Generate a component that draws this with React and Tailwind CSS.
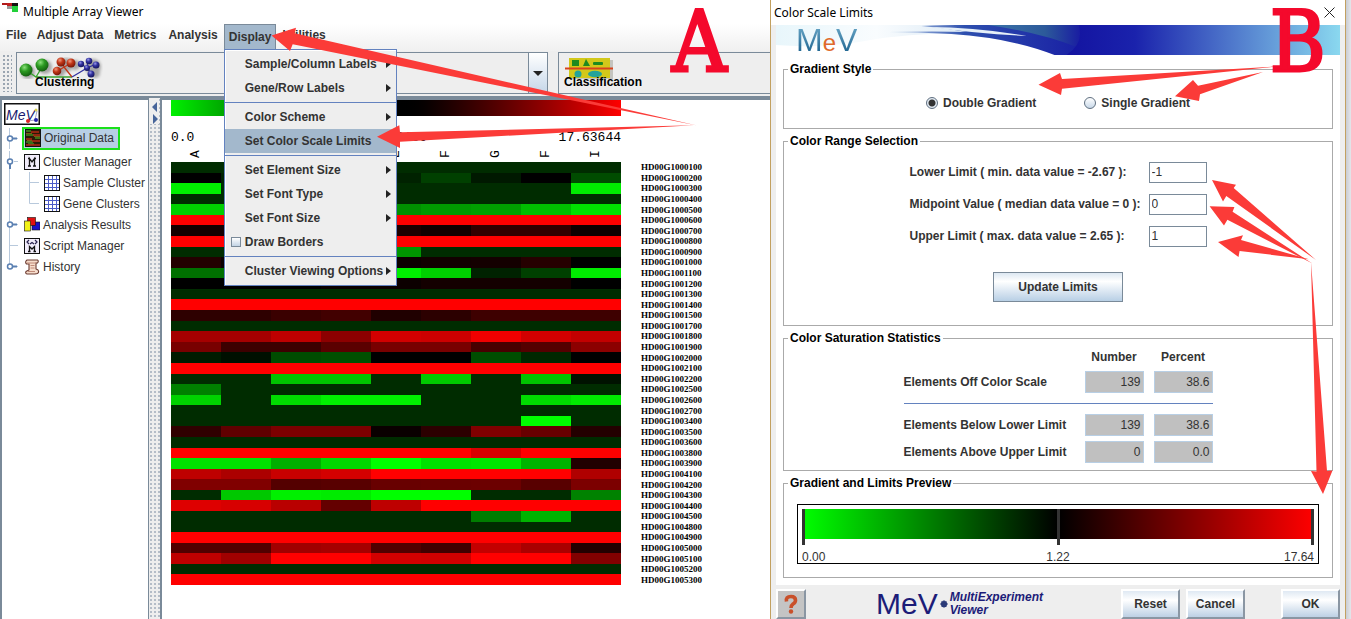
import React from "react";

const R = 255;
const D = -44;
const fill = (v) => Array(9).fill(v);

// Expression level per gene: positive values are red, negative values green.
const genes = [
  ["1000100", fill(D)],
  ["1000200", [0, -34, -34, -34, -34, -64, -25, 0, -76]],
  ["1000300", [-240, D, D, D, D, D, D, D, -235]],
  ["1000400", fill(D)],
  ["1000500", [-208, -208, -160, -150, -144, -155, -160, -190, -225]],
  ["1000600", fill(R)],
  ["1000700", [20, 20, 20, 30, 30, 18, 50, 50, 15]],
  ["1000800", fill(R)],
  ["1000900", [D, D, D, D, -150, D, D, D, D]],
  ["1001000", [35, 10, 10, 10, 12, 18, 20, 38, 0]],
  ["1001100", [-112, -112, -150, -200, -240, -208, -34, -64, -235]],
  ["1001200", [0, 0, 0, 10, 12, 20, 20, 20, 0]],
  ["1001300", fill(D)],
  ["1001400", fill(R)],
  ["1001500", [46, 46, 58, 66, 32, 44, 62, 62, 62]],
  ["1001700", fill(D)],
  ["1001800", [165, 165, 190, 140, 210, 205, 240, 210, 195]],
  ["1001900", [120, 60, 60, 90, 120, 120, 72, 84, 140]],
  ["1002000", [-28, -16, -76, -80, 0, 0, -78, -40, 0]],
  ["1002100", fill(R)],
  ["1002200", [D, D, -195, -195, D, -200, D, -195, -18]],
  ["1002500", [-128, D, D, D, D, D, D, D, D]],
  ["1002600", [-210, D, -220, -240, -240, D, D, -220, -235]],
  ["1002700", fill(D)],
  ["1003400", [D, D, D, D, D, D, D, -255, D]],
  ["1003500", [48, 96, 124, 124, 10, 44, 128, 104, 36]],
  ["1003600", fill(D)],
  ["1003800", [R, R, R, R, R, R, 215, R, R]],
  ["1003900", [-225, -225, -175, -215, -255, -225, -230, -180, 34]],
  ["1004100", [190, 172, 200, 212, R, R, R, R, 176]],
  ["1004200", [128, 128, 84, 88, 104, 106, 108, 88, 124]],
  ["1004300", [D, -200, -240, -235, -255, -255, D, D, -130]],
  ["1004400", [222, 215, 185, 100, 190, R, R, R, R]],
  ["1004500", [D, D, D, D, D, D, -125, -180, D]],
  ["1004800", fill(D)],
  ["1004900", fill(R)],
  ["1005000", [80, 80, 160, 165, 80, 64, 195, 170, 36]],
  ["1005100", [190, 160, R, R, 210, 208, R, R, 130]],
  ["1005200", fill(D)],
  ["1005300", fill(R)],
];

const samples = ["A", "B", "C", "D", "E", "F", "G", "F", "I"];
const color = (v) => (v >= 0 ? `rgb(${v},0,0)` : `rgb(0,${-v},0)`);

function HeatMap() {
  return (
    <div className="flex gap-5">
      <svg
        className="h-[423px] w-[450px] shrink-0"
        viewBox="0 0 9 40"
        preserveAspectRatio="none"
        shapeRendering="crispEdges"
        aria-label="Expression heat map"
      >
        {genes.map(([id, row], y) =>
          row.map((v, x) => (
            <rect key={id + x} x={x} y={y} width="1" height="1" fill={color(v)} />
          ))
        )}
      </svg>
      <ul className="grid h-[423px] auto-rows-fr font-['Liberation_Serif',serif] text-[9px] leading-[10px] font-bold text-black">
        {genes.map(([id]) => (
          <li key={id} className="flex items-center">HD00G{id}</li>
        ))}
      </ul>
    </div>
  );
}

function ClusterIcon() {
  return (
    <svg width="84" height="22" viewBox="0 0 84 22">
      <defs>
        <radialGradient id="gBall" cx=".38" cy=".3" r=".7">
          <stop offset="0" stopColor="#8be07a" /><stop offset=".45" stopColor="#2c9a22" /><stop offset="1" stopColor="#146010" />
        </radialGradient>
        <radialGradient id="rBall" cx=".38" cy=".3" r=".7">
          <stop offset="0" stopColor="#f29a80" /><stop offset=".45" stopColor="#c23718" /><stop offset="1" stopColor="#7a1808" />
        </radialGradient>
        <radialGradient id="bBall" cx=".38" cy=".3" r=".7">
          <stop offset="0" stopColor="#9a9ae8" /><stop offset=".45" stopColor="#3232a0" /><stop offset="1" stopColor="#16165c" />
        </radialGradient>
        <filter id="soft" x="-20%" y="-20%" width="150%" height="150%"><feGaussianBlur stdDeviation="1.5" /></filter>
      </defs>
      <g fill="#777" opacity=".6" filter="url(#soft)">
        <circle cx="9" cy="15" r="7" /><circle cx="26" cy="10" r="7" /><circle cx="47" cy="8" r="7" />
        <circle cx="56" cy="8" r="5" /><circle cx="41" cy="15" r="5" /><circle cx="74" cy="10" r="8" /><circle cx="76" cy="16" r="5" />
      </g>
      <path d="M7 13 17 20 23 10M17 20h36" fill="none" stroke="#3aa32f" strokeWidth="1.3" />
      <path d="M39 14 45 10 53 20 45 10 43 5M45 10 53 6" fill="none" stroke="#c23718" strokeWidth="1.3" />
      <path d="M53 20 68 11 62 7M68 11l1-7M68 11l9-4M68 11l4 5" fill="none" stroke="#3232a0" strokeWidth="1.3" />
      <g fill="url(#gBall)"><circle cx="7" cy="13" r="6.5" /><circle cx="23" cy="8" r="6.5" /></g>
      <g fill="url(#rBall)"><circle cx="42" cy="5" r="4.5" /><circle cx="52" cy="6" r="4.5" /><circle cx="38" cy="14" r="4.3" /></g>
      <g fill="url(#bBall)"><circle cx="70" cy="4" r="3.3" /><circle cx="62" cy="7" r="3.2" /><circle cx="77" cy="8" r="3.5" /><circle cx="68" cy="11" r="3" /><circle cx="72" cy="17" r="3.5" /></g>
    </svg>
  );
}

function ClassificationIcon() {
  return (
    <svg width="50" height="22" viewBox="0 0 50 22">
      <rect x="7" y="3" width="42" height="19" fill="#a8a8a0" opacity=".6" />
      <rect x="5" y="1" width="41" height="20" fill="#d2c81a" />
      <rect x="8" y="3" width="7" height="6" fill="#1f8a1f" />
      <path d="M19 9 22 2 26 9Z" fill="#1f8a1f" />
      <rect x="29" y="5" width="10" height="3" rx="1" fill="#1f8a1f" />
      <path d="M1 11.500H49" stroke="#d8431d" strokeWidth="2" />
      <circle cx="14" cy="17" r="3.500" fill="#23a39a" />
      <ellipse cx="31" cy="17" rx="7" ry="3.200" fill="#23a39a" />
    </svg>
  );
}

const Caret = () => (
  <svg width="5" height="8" viewBox="0 0 5 8" className="shrink-0"><path d="M0 0 5 4 0 8Z" fill="#222" /></svg>
);

function Item({ children, sub, on }) {
  return (
    <button
      role="menuitem"
      className={
        "flex h-6 w-full items-center justify-between pr-[5px] pl-5 text-left " + (on ? "bg-[#a3b8cc]" : "")
      }
    >
      {children}
      {sub && <Caret />}
    </button>
  );
}

const Sep = () => <hr className="my-[2px] border-t border-[#6382bf]" />;

function DisplayMenu() {
  return (
    <div role="menu" className="absolute top-full left-0 z-10 w-[173px] border border-[#6382bf] bg-[#eeeeee] pt-[2px] pb-[2px] shadow-[inset_1px_1px_0_#fff]">
      <Item sub>Sample/Column Labels</Item>
      <Item sub>Gene/Row Labels</Item>
      <Sep />
      <Item sub>Color Scheme</Item>
      <Item on>Set Color Scale Limits</Item>
      <Sep />
      <Item sub>Set Element Size</Item>
      <Item sub>Set Font Type</Item>
      <Item sub>Set Font Size</Item>
      <label className="flex h-6 items-center gap-1 pl-[6px]">
        <input type="checkbox" className="size-[10px] appearance-none border border-[#7a8a99] bg-linear-to-b from-white to-[#c3d4e5]" />
        Draw Borders
      </label>
      <Sep />
      <Item sub>Cluster Viewing Options</Item>
    </div>
  );
}

function Knob({ open, last, leaf }) {
  return (
    <svg width="20" height="21" viewBox="0 0 20 21" className="shrink-0">
      <path d={last ? "M7.500 0V10" : "M7.500 0V21"} stroke="#b8c9dc" />
      {leaf ? (
        <path d="M7.500 10.500H16" stroke="#b8c9dc" />
      ) : (
        <>
          <path d="M12 10.500H16" stroke="#b8c9dc" />
          <path d={open ? "M8 12V18" : "M10 10.500H15"} stroke="#5b80b2" strokeWidth="2" />
          <circle cx="8" cy="10.500" r="2.500" fill="#fff" stroke="#5b80b2" strokeWidth="1.500" />
        </>
      )}
    </svg>
  );
}

const DataIcon = () => (
  <svg width="16" height="18" viewBox="0 0 16 18" className="shrink-0">
    <rect width="16" height="18" fill="#2a1a06" />
    <path d="M1 2h5M1 6h8M10 9h5M1 13h7M3 15h6" stroke="#3f8a1f" strokeWidth="1.500" />
    <path d="M6 3h8M8 6h7M1 10h6M7 12h8M1 16h14" stroke="#b32a14" strokeWidth="1.500" />
    <path d="M1 4.500h6M9 7.500h6M2 11.500h5" stroke="#7a5a14" />
    <rect x=".5" y=".5" width="15" height="17" fill="none" stroke="#111" />
  </svg>
);
const MIcon = ({ script }) => (
  <svg width="16" height="16" viewBox="0 0 16 16" className="shrink-0">
    <rect x=".5" y=".5" width="15" height="15" fill="#f1ecfa" stroke="#111" />
    {script ? (
      <>
        <path d="M5.500 13.500V8.500L8 11 10.500 8.500V13.500M4 13.500H6.500M9.500 13.500H12" fill="none" stroke="#111" strokeWidth="1.300" />
        <path d="M5 2 3 4 5 6M11 2 13 4 11 6M6 6 8 4.500 10 6" fill="none" stroke="#2a2450" strokeWidth="1.200" />
      </>
    ) : (
      <path d="M5.500 12V4.500L8 8 10.500 4.500V12M4 4.500H6M10 4.500H12M4 12H7M9 12H12" fill="none" stroke="#111" strokeWidth="1.300" />
    )}
  </svg>
);
const GridIcon = () => (
  <svg width="16" height="16" viewBox="0 0 16 16" className="shrink-0">
    <rect x=".5" y=".5" width="15" height="15" fill="#fff" stroke="#111" />
    <path d="M4.500 1V15M8.500 1V15M12.500 1V15M1 4.500H15M1 8.500H15M1 12.500H15" stroke="#4c5cc8" />
  </svg>
);
const ResultsIcon = () => (
  <svg width="16" height="16" viewBox="0 0 16 16" className="shrink-0">
    <rect x="8" y="5" width="8" height="8" fill="#1a10c8" stroke="#111" strokeWidth=".6" />
    <rect x="3.500" y=".5" width="8" height="8" fill="#e01010" stroke="#111" strokeWidth=".6" />
    <rect x=".5" y="4" width="6" height="10" fill="#f2f218" stroke="#111" strokeWidth=".6" />
  </svg>
);
const HistoryIcon = () => (
  <svg width="16" height="16" viewBox="0 0 16 16" className="shrink-0">
    <path d="M3 1H13.500Q15 2 13.500 4H12V10L14 11Q15.500 13 13.500 14.500L11 15H3Q1 14.500 2 12.500L5 11V5H2.500Q.5 3 3 1Z" fill="#f6dccb" stroke="#6b3a30" strokeWidth="1.100" />
    <path d="M3 4H12M6.500 6.500H10.500M6.500 9H10.500M4 12.500H11" stroke="#c08a78" />
  </svg>
);

function Branch({ last }) {
  return (
    <>
      <svg width="20" height="21" viewBox="0 0 20 21" className="shrink-0"><path d="M7.500 0V21" stroke="#b8c9dc" /></svg>
      <svg width="20" height="21" viewBox="0 0 20 21" className="shrink-0">
        <path d={last ? "M7.500 0V10.500H17" : "M7.500 0V21M7.500 10.500H17"} fill="none" stroke="#b8c9dc" />
      </svg>
    </>
  );
}

function Tree() {
  const row = "flex h-[21px] items-center";
  const text = "pl-[3px] whitespace-nowrap";
  return (
    <nav className="w-[149px] shrink-0 overflow-hidden border-t-2 border-r border-l-2 border-[#7a8a99] bg-white pt-[3px] text-[12px] leading-4 text-[#333]">
      <svg width="36" height="22" viewBox="0 0 36 22" className="ml-[2px]">
        <rect x=".75" y=".75" width="34.500" height="20.500" fill="#fff" stroke="#111" strokeWidth="1.500" />
        <text x="2" y="17" fontFamily="Liberation Sans" fontStyle="italic" fontSize="14" fill="#1b1b70">MeV</text>
        <path d="M24 18 31 17 33 8" fill="none" stroke="#a0a0c0" />
        <circle cx="24" cy="18" r="2" fill="#d22" /><circle cx="32" cy="17" r="2" fill="#22a" /><circle cx="32" cy="7" r="1.500" fill="#d8cf50" />
      </svg>
      <ul>
        <li className="flex h-[26px] items-center">
          <Knob />
          <span className="flex h-[23px] items-center gap-[3px] border-2 border-[#1be01b] bg-[#b8cfe5] pr-1 pl-px whitespace-nowrap">
            <DataIcon />Original Data
          </span>
        </li>
        <li className={row}><Knob open /><span className="pl-[2px]"><MIcon /></span><span className={text}>Cluster Manager</span></li>
        <li className={row}><Branch /><span className="pl-[2px]"><GridIcon /></span><span className={text}>Sample Cluster</span></li>
        <li className={row}><Branch last /><span className="pl-[2px]"><GridIcon /></span><span className={text}>Gene Clusters</span></li>
        <li className={row}><Knob /><span className="pl-[2px]"><ResultsIcon /></span><span className={text}>Analysis Results</span></li>
        <li className={row}><Knob leaf /><span className="pl-[2px]"><MIcon script /></span><span className={text}>Script Manager</span></li>
        <li className={row}><Knob last /><span className="pl-[2px]"><HistoryIcon /></span><span className={text}>History</span></li>
      </ul>
    </nav>
  );
}

function Viewer() {
  return (
    <main className="flex min-w-0 flex-1 flex-col bg-[#eeeeee]">
      <header className="flex h-6 items-center gap-1 bg-white pl-[2px] font-['Noto_Sans',sans-serif] text-[12px] text-black">
        <svg width="17" height="18" viewBox="0 0 17 18">
          <path d="M0 0h5v2H0z" fill="#b01a1a" /><path d="M5 0h5v3H5z" fill="#c02020" /><path d="M10 0h6v3h-6z" fill="#111" />
          <path d="M5 3h5v3H5z" fill="#999" /><path d="M10 3h6v6h-6z" fill="#22d03a" />
        </svg>
        <h1>Multiple Array Viewer</h1>
      </header>
      <div className="flex h-[27px] items-start bg-linear-to-b from-white to-[#f0f0f0] text-[12px] leading-[23px] font-bold text-[#333]">
        <button className="pr-[5px] pl-[6px]">File</button>
        <button className="px-[5px]">Adjust Data</button>
        <button className="px-[6px]">Metrics</button>
        <button className="px-[6px]">Analysis</button>
        <div className="relative h-[25px] leading-4">
          <button className="h-full border border-b-0 border-[#7a8a99] bg-[#a3b8cc] px-1 pb-px">Display</button>
          <DisplayMenu />
        </div>
        <button className="px-[6px]">Utilities</button>
      </div>
      <div className="flex h-[47px] border-b-2 border-[#7a8a99] pt-px pb-[2px]">
        <div className="m-[2px] w-[10px] bg-[radial-gradient(#9aa5b1_1px,transparent_1px)] bg-[length:4px_4px]" />
        <button aria-haspopup="listbox" className="ml-[2px] flex w-[532px] shrink-0 border border-[#7a8a99]">
          <span className="flex h-full flex-1 flex-col items-start pt-1 pl-[2px] text-[12px] leading-[14px] font-bold text-black">
            <ClusterIcon />
            <span className="-mt-1 pl-4">Clustering</span>
          </span>
          <span className="flex h-full w-[19px] items-center justify-center border-l border-[#7a8a99] bg-linear-to-b from-white to-[#c5d6e8]">
            <svg width="10" height="5" viewBox="0 0 10 5"><path d="M0 0H10L5 5Z" fill="#222" /></svg>
          </span>
        </button>
        <button className="ml-[10px] flex flex-1 flex-col items-start border border-r-0 border-[#7a8a99] pt-1 pl-[5px] text-[12px] leading-[14px] font-bold text-black">
          <ClassificationIcon />
          <span className="-mt-1">Classification</span>
        </button>
      </div>
      <div className="flex flex-1">
        <Tree />
        <div className="flex w-[11px] shrink-0 flex-col items-center bg-[#eeeeee] bg-[radial-gradient(#b4bdc8_1px,transparent_1px)] bg-[length:4px_4px]">
          <svg width="9" height="26" viewBox="0 0 9 26" className="bg-[#eeeeee]"><path d="M7 4V14L2 9ZM3 16V26L8 21Z" fill="#47659a" /></svg>
        </div>
        <section className="min-w-0 flex-1 border-t-2 border-l-2 border-[#7a8a99] bg-white pl-[9px]">
          <div className="w-[450px]">
            <div className="h-4 bg-linear-to-r from-[#00f000] via-black to-[#f00]" />
            <div className="grid grid-cols-3 pt-[14px] font-['Liberation_Mono',monospace] text-[13px] leading-4 text-black">
              <span>0.0</span>
              <span className="text-center">1.223139</span>
              <span className="text-right">17.63644</span>
            </div>
            <div className="grid h-4 grid-cols-9 font-['Liberation_Mono',monospace] text-[13px] leading-4 text-black">
              {samples.map((s, i) => (
                <span key={i} className="flex items-center justify-center"><span className="-rotate-90">{s}</span></span>
              ))}
            </div>
          </div>
          <HeatMap />
        </section>
      </div>
    </main>
  );
}

function Group({ title, className, children }) {
  return (
    <fieldset className={"min-w-0 border border-[#aaaaaa] " + className}>
      <legend className="ml-1 px-[2px] text-[12px] leading-4 text-black">{title}</legend>
      {children}
    </fieldset>
  );
}

function Radio({ id, label, checked }) {
  return (
    <label htmlFor={id} className="flex items-center gap-[5px]">
      <input
        id={id}
        name="gradient"
        type="radio"
        defaultChecked={checked}
        className="size-3 appearance-none rounded-full border border-[#5f6f80] bg-linear-to-b from-white to-[#c8d8e8] checked:bg-[radial-gradient(#333_0_3px,#e3ebf3_4px)]"
      />
      {label}
    </label>
  );
}

function Limit({ id, label, value }) {
  return (
    <div className="flex h-8 items-center justify-between">
      <label htmlFor={id}>{label}</label>
      <input id={id} defaultValue={value} className="h-[21px] w-[58px] border border-[#7a8a99] bg-white pl-[2px] font-normal" />
    </div>
  );
}

function StatRow({ label, n, p }) {
  const cell = "block h-[22px] w-[59px] border border-[#b8cfe5] bg-[#c0c0c0] pr-[2px] text-right leading-5 font-normal";
  return (
    <tr className="h-[27px]">
      <th scope="row" className="text-left">{label}</th>
      <td><span className={cell}>{n}</span></td>
      <td className="pl-[10px]"><span className={cell}>{p}</span></td>
    </tr>
  );
}

function Banner() {
  return (
    <div className="relative h-[30px] bg-white">
      <svg className="h-full w-full" viewBox="0 0 563 30" preserveAspectRatio="none">
        <defs>
          <linearGradient id="sky"><stop offset="0" stopColor="#1313a0" /><stop offset=".25" stopColor="#1a22ac" /><stop offset="1" stopColor="#8ad8ef" /></linearGradient>
          <linearGradient id="pale"><stop offset="0" stopColor="#e8f6fb" /><stop offset=".5" stopColor="#f9fcfe" /><stop offset="1" stopColor="#d9e8f4" /></linearGradient>
          <linearGradient id="wave"><stop offset="0" stopColor="#c8dcee" /><stop offset=".35" stopColor="#2d4fae" /><stop offset="1" stopColor="#1414a2" /></linearGradient>
          <linearGradient id="teal"><stop offset="0" stopColor="#3c74a8" /><stop offset=".6" stopColor="#2c5a9a" /><stop offset="1" stopColor="#1818a2" /></linearGradient>
        </defs>
        <path d="M0 0H200V8Q140 8 100 14 50 24 0 20Z" fill="url(#pale)" />
        <path d="M145 1Q170 0 180 0H330V30H278Q235 13 175 9 140 7 112 7 160 6 190 7 170 3 145 1Z" fill="url(#wave)" />
        <path d="M152 2Q200 2 250 11 205 9 152 2Z" fill="#e6f0f8" />
        <path d="M212 0H300Q312 10 300 22 265 8 212 0Z" fill="url(#teal)" />
        <path d="M302 0H563V30H290Q308 18 302 0Z" fill="url(#sky)" />
      </svg>
      <div className="absolute top-0 left-5 flex items-baseline text-[32px] leading-[30px] font-normal">
        <span className="bg-linear-to-b from-[#6aa8c8] to-[#16608c] bg-clip-text text-transparent">M</span>
        <span className="text-[24px] text-[#e0692a]">e</span>
        <span className="bg-linear-to-b from-[#6aa8c8] to-[#16608c] bg-clip-text text-transparent">V</span>
      </div>
    </div>
  );
}

const btn =
  "h-[30px] w-[59px] border-2 border-t-white border-l-white border-r-[#8a96a3] border-b-[#8a96a3] bg-linear-to-b from-[#dfe9f3] via-white via-35% to-[#bdd0e4] font-bold";

function Dialog() {
  return (
    <section role="dialog" aria-label="Color Scale Limits" className="flex w-[576px] shrink-0 flex-col border-x border-[#c2a060] bg-[#eeeeee] text-[12px] leading-4 font-bold text-[#333]">
      <header className="flex h-[25px] items-center justify-between bg-white pr-[10px] pl-[3px] font-['Noto_Sans',sans-serif] font-normal text-black">
        <h2>Color Scale Limits</h2>
        <button aria-label="Close"><svg width="11" height="11" viewBox="0 0 11 11"><path d="M.5 .5 10.500 10.500M10.500 .5 .5 10.500" stroke="#222" /></svg></button>
      </header>
      <div className="mx-[5px] bg-white pb-[7px]">
        <Banner />
        <div className="flex flex-col gap-1 px-[7px] pt-[6px]">
          <Group title="Gradient Style" className="h-[68px]">
            <div className="flex justify-center gap-12 pt-[18px]">
              <Radio id="double" label="Double Gradient" checked />
              <Radio id="single" label="Single Gradient" />
            </div>
          </Group>
          <Group title="Color Range Selection" className="h-[193px]">
            <div className="mx-auto w-[297px] pt-[7px]">
              <Limit id="lower" label="Lower Limit ( min. data value = -2.67 ):" value="-1" />
              <Limit id="mid" label="Midpoint Value ( median data value = 0 ):" value="0" />
              <Limit id="upper" label="Upper Limit ( max. data value = 2.65 ):" value="1" />
            </div>
            <button className="mx-auto mt-5 block h-[30px] w-[130px] border border-[#7a8a99] bg-linear-to-b from-[#dde8f2] via-white via-30% to-[#b8cfe5]">Update Limits</button>
          </Group>
          <Group title="Color Saturation Statistics" className="h-[141px]">
            <table className="mx-auto w-[309px]">
              <thead>
                <tr className="h-[22px]">
                  <td />
                  <th scope="col" className="w-[59px]">Number</th>
                  <th scope="col" className="w-[69px] pl-[10px]">Percent</th>
                </tr>
              </thead>
              <tbody>
                <StatRow label="Elements Off Color Scale" n="139" p="38.6" />
                <tr className="h-4"><td colSpan={3}><hr className="border-[#6382bf]" /></td></tr>
                <StatRow label="Elements Below Lower Limit" n="139" p="38.6" />
                <StatRow label="Elements Above Upper Limit" n="0" p="0.0" />
              </tbody>
            </table>
          </Group>
          <Group title="Gradient and Limits Preview" className="h-[103px]">
            <div className="mx-[13px] mt-[13px] h-[60px] border border-black px-1 pt-1 font-normal">
              <div className="flex h-9 justify-between bg-[linear-gradient(90deg,#0f0,#000,#f00)] bg-[length:100%_30px] bg-no-repeat">
                <span className="w-[3px] bg-[#333]" />
                <span className="w-[3px] bg-[#333]" />
                <span className="w-[3px] bg-[#333]" />
              </div>
              <div className="grid grid-cols-3 pt-1">
                <span>0.00</span>
                <span className="text-center">1.22</span>
                <span className="text-right">17.64</span>
              </div>
            </div>
          </Group>
        </div>
      </div>
      <footer className="mx-[5px] mt-1 flex items-center">
        <button aria-label="Help" className="flex size-[30px] items-center justify-center border-2 border-t-white border-l-white border-r-[#8a96a3] border-b-[#8a96a3] bg-[#c4c4c4]">
          <svg width="16" height="20" viewBox="0 0 16 20">
            <path d="M3.500 7.500Q2.500 2.500 8 2.500 12.500 2.500 12.500 6.200 12.500 8.500 10 10 8 11.500 8 14" fill="none" stroke="#c9502a" strokeWidth="3.600" />
            <circle cx="8" cy="17.500" r="2.200" fill="#c9502a" />
          </svg>
        </button>
        <div className="ml-[70px] flex items-center text-[#1c1c78]">
          <span className="text-[30px] leading-[30px] font-normal">MeV</span>
          <svg width="8" height="8" viewBox="0 0 8 8" className="mx-[2px]"><path d="M4 .5V7.500M.5 4H7.500M1.500 1.500 6.500 6.500M6.500 1.500 1.500 6.500" stroke="#2a3a78" strokeWidth="1.800" /></svg>
          <span className="leading-[13px] italic">MultiExperiment<br />Viewer</span>
        </div>
        <div className="ml-auto flex">
          <button className={btn}>Reset</button>
          <button className={btn + " ml-[6px]"}>Cancel</button>
          <button className={btn + " ml-9"}>OK</button>
        </div>
      </footer>
    </section>
  );
}

function Annotations() {
  return (
    <div className="pointer-events-none absolute inset-0 z-20 overflow-hidden font-['DejaVu_Serif_Condensed','DejaVu_Serif',serif] text-[84px] leading-[84px] text-[#f4092c] [-webkit-text-stroke:3px_#f4092c]">
      <svg width="1351" height="619" viewBox="0 0 1351 619" fill="#fb3b38">
        <path d="M271.500 35.500 296 27.700 294.700 33.300 697 125.500 292.700 44.300 290 51Z" />
        <path d="M377 136.700 399.300 125.300 400 132.300 694 125.300 400 141.700 400 148Z" />
        <path d="M1038.500 84.700 1060 73 1062 79 1278 66.300 1062 88.700 1061 95Z" />
        <path d="M1175 96.300 1193 80 1198 85.700 1263 72 1200 94.300 1199 101Z" />
        <path d="M1212 180 1236 184.700 1233.700 188 1316 260 1226.300 196 1223 201.500Z" />
        <path d="M1209.600 206.300 1234.400 207 1232.600 211.700 1312 263.300 1227.400 219.700 1224 225.500Z" />
        <path d="M1218 242 1243 235.300 1241 240 1309 259.300 1239.600 251 1238.500 257Z" />
        <path d="M1323 494 1311 471 1316.500 471.500 1311 262 1327 471 1332.500 470.500Z" />
      </svg>
      <span className="absolute top-0 left-[672px]">A</span>
      <span className="absolute top-0 left-[1270px]">B</span>
    </div>
  );
}

export default function App() {
  return (
    <div className="relative flex min-h-screen overflow-hidden bg-[#d9dce2] font-['Liberation_Sans',Arial,sans-serif]">
      <Viewer />
      <Dialog />
      <div className="w-[5px] shrink-0 bg-linear-to-r from-[#c9ccd3] to-[#e4e6ea]" />
      <Annotations />
    </div>
  );
}
